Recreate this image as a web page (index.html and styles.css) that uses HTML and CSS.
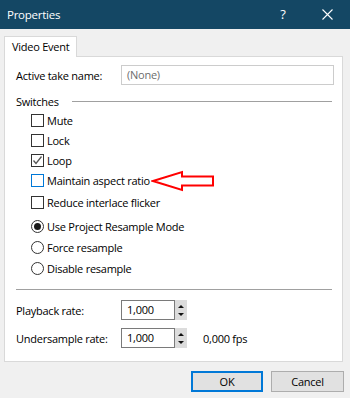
FILE: index.html
```html
<!DOCTYPE html>
<html>
<head>
<meta charset="utf-8">
<link rel="stylesheet" href="styles.css">
</head>
<body>
<div class="titlebar">
  <span class="title">Properties</span>
  <span class="help">?</span>
  <svg class="close" width="11" height="11" viewBox="0 0 11 11"><path d="M0.5 0.5 L10.5 10.5 M10.5 0.5 L0.5 10.5" stroke="#fff" stroke-width="1.1" fill="none"/></svg>
</div>
<div class="dialog">
  <div class="tabs"><div class="tab">Video Event</div></div>
  <div class="panel">
    <div class="row first">
      <span class="label">Active take name:</span>
      <div class="textbox">(None)</div>
    </div>
    <div class="group-head"><span>Switches</span><div class="rule"></div></div>
    <div class="check"><span class="box"></span>Mute</div>
    <div class="check"><span class="box"></span>Lock</div>
    <div class="check"><span class="box"><svg width="11" height="11" viewBox="0 0 11 11"><path d="M1.5 5.5 L4 8.5 L9.5 1.5" stroke="#555" stroke-width="1.3" fill="none"/></svg></span>Loop</div>
    <div class="check"><span class="box hot"></span>Maintain aspect ratio</div>
    <div class="check gap"><span class="box"></span>Reduce interlace flicker</div>
    <div class="radio first-radio"><span class="circle on"></span>Use Project Resample Mode</div>
    <div class="radio"><span class="circle"></span>Force resample</div>
    <div class="radio"><span class="circle"></span>Disable resample</div>
    <div class="sep"></div>
    <div class="row spinrow">
      <span class="label">Playback rate:</span>
      <div class="spin"><div class="spinbox">1,000</div><div class="arrows"><span class="up"></span><span class="down"></span></div></div>
    </div>
    <div class="row spinrow second">
      <span class="label">Undersample rate:</span>
      <div class="spin"><div class="spinbox">1,000</div><div class="arrows"><span class="up"></span><span class="down"></span></div></div>
      <span class="fps">0,000 fps</span>
    </div>
  </div>
  <div class="buttons">
    <div class="btn default">OK</div>
    <div class="btn">Cancel</div>
  </div>
</div>
<svg class="annot" width="70" height="24" viewBox="0 0 70 24"><path d="M2 11 L31 2 L31 6.5 L62 6.5 L62 15.5 L31 15.5 L31 20 Z" fill="none" stroke="#ff0000" stroke-width="2" stroke-linejoin="miter"/></svg>
</body>
</html>
```
FILE: styles.css
```css
* { box-sizing: border-box; }
html, body { margin: 0; padding: 0; }
body {
  width: 350px;
  height: 398px;
  background: #f0f0f0;
  font-family: "Open Sans", "Noto Sans", sans-serif;
  font-size: 11px;
  letter-spacing: -0.25px;
  color: #000;
  position: relative;
  overflow: hidden;
  white-space: nowrap;
}
.titlebar {
  height: 29px;
  background: #144764;
  color: #fff;
  display: flex;
  align-items: center;
  padding-left: 7px;
  position: relative;
}
.title { font-size: 11.5px; flex: 1; }
.help { font-size: 13px; width: 20px; text-align: center; margin: -1px 29px 0 0; }
.close { margin: 0 17px 0 0; display: block; }
.dialog { padding: 7px 6px 0 4px; }
.tabs { display: flex; height: 20px; }
.tab {
  width: 73px;
  height: 21px;
  border: 1px solid #d9d9d9;
  border-bottom: none;
  background: #fff;
  padding: 2px 0 0 7px;
  position: relative;
  z-index: 1;
}
.panel {
  width: 339px;
  height: 306px;
  background: #fff;
  border: 1px solid #d9d9d9;
  padding: 0 10px 0 11px;
}
.row { display: flex; align-items: center; height: 20px; }
.row.first { margin-top: 8px; }
.label { width: 105px; flex: none; }
.textbox {
  flex: none;
  width: 213px;
  height: 20px;
  border: 1px solid #cccccc;
  color: #6d6d6d;
  padding: 1px 0 0 5px;
  line-height: 16px;
}
.group-head {
  display: flex;
  align-items: center;
  height: 16px;
  margin-top: 8px;
}
.rule { flex: 1; height: 1px; background: #a0a0a0; margin-left: 13px; }
.check, .radio {
  display: flex;
  align-items: center;
  height: 20px;
  padding-left: 15px;
}
.group-head + .check { margin-top: 1px; }
.check.gap { margin-top: 2px; }
.box {
  width: 13px;
  height: 13px;
  border: 1px solid #333;
  margin-right: 3px;
  display: flex;
  align-items: center;
  justify-content: center;
  flex: none;
}
.box.hot { border-color: #0078d7; }
.radio { height: 21px; }
.first-radio { margin-top: 4px; }
.circle {
  width: 13px;
  height: 13px;
  border: 1px solid #333;
  border-radius: 50%;
  margin-right: 3px;
  flex: none;
  display: flex;
  align-items: center;
  justify-content: center;
}
.circle.on::after {
  content: "";
  width: 7px;
  height: 7px;
  border-radius: 50%;
  background: #1a1a1a;
}
.sep { height: 1px; background: #a0a0a0; margin-top: 10px; }
.spinrow { margin-top: 10px; }
.spinrow.second { margin-top: 8px; }
.spin { display: flex; height: 20px; flex: none; }
.spinbox {
  width: 54px;
  height: 20px;
  border: 1px solid #7a7a7a;
  padding: 1px 0 0 5px;
  line-height: 16px;
}
.arrows {
  width: 12px;
  height: 20px;
  background: #dcdcdc;
  display: flex;
  flex-direction: column;
  align-items: center;
  justify-content: space-between;
  padding: 5px 0 4px;
}
.up { width: 0; height: 0; border-left: 3px solid transparent; border-right: 3px solid transparent; border-bottom: 3px solid #111; }
.down { width: 0; height: 0; border-left: 3px solid transparent; border-right: 3px solid transparent; border-top: 3px solid #111; }
.fps { margin-left: 16px; }
.buttons {
  display: flex;
  justify-content: flex-end;
  gap: 8px;
  margin-top: 9px;
  width: 340px;
}
.btn {
  width: 73px;
  height: 21px;
  background: #e1e1e1;
  border: 1px solid #adadad;
  display: flex;
  align-items: center;
  justify-content: center;
}
.btn.default { border: 2px solid #0078d7; width: 72px; }
.annot { position: absolute; left: 151px; top: 170px; }
```
